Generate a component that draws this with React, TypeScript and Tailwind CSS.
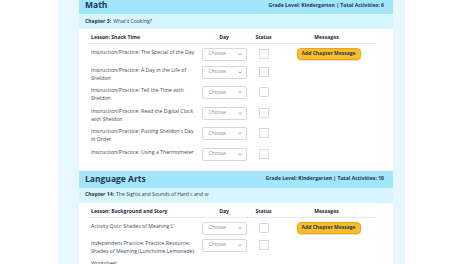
import React from "react";

type Row = { lines: string[]; h: number; button?: boolean; controls?: boolean };

const mathRows: Row[] = [
  { lines: ["Instruction/Practice: The Special of the Day"], h: 18, button: true },
  { lines: ["Instruction/Practice: A Day in the Life of", "Sheldon"], h: 20.5 },
  { lines: ["Instruction/Practice: Tell the Time with", "Sheldon"], h: 20.5 },
  { lines: ["Instruction/Practice: Read the Digital Clock", "with Sheldon"], h: 20.5 },
  { lines: ["Instruction/Practice: Putting Sheldon's Day", "in Order"], h: 20.5 },
  { lines: ["Instruction/Practice: Using a Thermometer"], h: 18 },
];

const laRows: Row[] = [
  { lines: ["Activity Quiz: Shades of Meaning C"], h: 17, button: true },
  { lines: ["Independent Practice: Practice Resource:", "Shades of Meaning (Lunchtime Lemonade)"], h: 20.5 },
  { lines: ["Worksheet"], h: 20, controls: false },
];

function Select() {
  return (
    <div className="w-[45px] h-[13px] border border-[#d4d8dd] rounded-[2px] bg-white flex items-center justify-between pl-[6px] pr-[4px]">
      <span className="text-[5px] text-[#8a9099]">Choose</span>
      <svg width="4" height="3" viewBox="0 0 4 3">
        <path d="M0.5 0.5 L2 2 L3.5 0.5" stroke="#6b7280" strokeWidth="0.7" fill="none" />
      </svg>
    </div>
  );
}

function TableRow({ row }: { row: Row }) {
  const showControls = row.controls !== false;
  return (
    <div className="flex items-start pt-[3.5px]" style={{ height: row.h }}>
      <div className="w-[110px] pl-[3px] text-[5.2px] leading-[8px] text-[#424a56]">
        {row.lines.map((l, i) => (
          <div key={i} className="whitespace-nowrap">{l}</div>
        ))}
      </div>
      <div className="w-[52px] flex justify-center">{showControls && <Select />}</div>
      <div className="w-[27px] flex justify-center pt-[1px]">
        {showControls && <div className="w-[10px] h-[10px] border border-[#d4d8dd] rounded-[1px] bg-white" />}
      </div>
      <div className="flex-1 flex justify-center pl-[4px]">
        {row.button && (
          <div className="h-[12px] w-[64px] rounded-[4px] bg-[#fbbd2a] border border-[#eea51c] shadow-[0_1px_1px_rgba(0,0,0,0.15)] flex items-center justify-center text-[5px] font-bold text-[#26375a]">
            Add Chapter Message
          </div>
        )}
      </div>
    </div>
  );
}

function Section({
  title,
  total,
  chapterNum,
  chapterTitle,
  lesson,
  rows,
  bodyClass,
}: {
  title: string;
  total: number;
  chapterNum: number;
  chapterTitle: string;
  lesson: string;
  rows: Row[];
  bodyClass: string;
}) {
  return (
    <div className="flex flex-col">
      <div className="h-[17px] bg-[#a3e5fa] flex items-center justify-between pl-[6px] pr-[9px]">
        <span className="text-[8.5px] font-bold text-[#1d3552]">{title}</span>
        <span className="text-[5.1px] font-bold text-[#1d3552]">
          Grade Level: Kindergarten | Total Activities: {total}
        </span>
      </div>
      <div className="h-[15px] bg-[#d6f5fd] flex items-center pl-[6px] text-[5.1px] text-[#33404f]">
        <span className="font-bold text-[#1d3552]">Chapter {chapterNum}:</span>
        <span className="ml-[2px]">{chapterTitle}</span>
      </div>
      <div className={"bg-white pl-[9px] pr-[17px] " + bodyClass}>
        <div className="flex h-[12px] items-center border-b border-[#e6e9ec] text-[5.1px] font-bold text-[#1d2a3a]">
          <div className="w-[110px] pl-[3px]">{lesson}</div>
          <div className="w-[52px] text-center">Day</div>
          <div className="w-[27px] text-center">Status</div>
          <div className="flex-1 text-center">Messages</div>
        </div>
        {rows.map((r, i) => (
          <TableRow key={i} row={r} />
        ))}
      </div>
    </div>
  );
}

export default function App() {
  return (
    <div
      className="w-[474px] h-[264px] overflow-hidden bg-white flex"
      style={{ fontFamily: '"Open Sans", "Noto Sans", sans-serif' }}
    >
      <div className="w-[58px] shrink-0" />
      <div className="w-[347px] shrink-0 bg-[#e6f7fd] pl-[21px] pr-[12px]">
        <div className="-mt-[3px] flex flex-col">
          <Section
            title="Math"
            total={6}
            chapterNum={3}
            chapterTitle="What's Cooking?"
            lesson="Lesson: Snack Time"
            rows={mathRows}
            bodyClass="pt-[3px] pb-[8.5px]"
          />
          <Section
            title="Language Arts"
            total={10}
            chapterNum={14}
            chapterTitle="The Sights and Sounds of Hard c and w"
            lesson="Lesson: Background and Story"
            rows={laRows}
            bodyClass="pt-[3.5px] pb-[6px]"
          />
        </div>
      </div>
    </div>
  );
}
